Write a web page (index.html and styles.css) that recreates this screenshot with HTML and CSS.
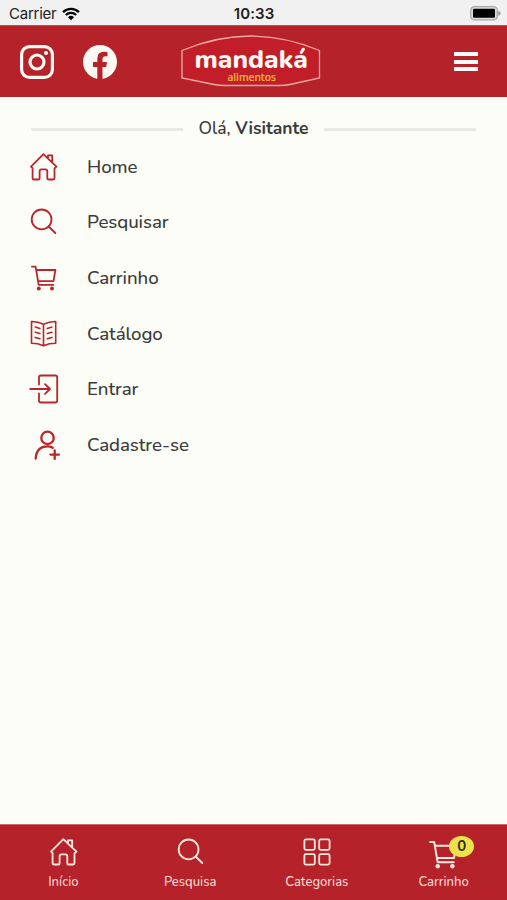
FILE: index.html
```html
<!DOCTYPE html>
<html lang="pt-BR">
<head>
<meta charset="utf-8">
<meta name="viewport" content="width=device-width">
<title>Mandaká</title>
<link rel="stylesheet" href="styles.css">
</head>
<body>
<svg class="defs" width="0" height="0">
  <symbol id="home" viewBox="0 0 28 28"><path d="M1 13.6 13.4 1.2 18 5.7V2.4h4.2v7.3l4.3 3.9-2 1.8V25q0 1.5-1.4 1.5h-4.5q-1.3 0-1.3-1.3v-6.8q0-2.1-1.9-2.1h-3.9q-1.9 0-1.9 2.1v6.8q0 1.3-1.3 1.3H4q-1.4 0-1.4-1.5v-9.8ZM18 5.7l4.2 4"/></symbol>
  <symbol id="search" viewBox="0 0 28 28"><circle cx="11.6" cy="11.4" r="9.9"/><path d="m18.700 18.500 6.600 6.500"/></symbol>
  <symbol id="cart" viewBox="0 0 28 28"><path d="M1.900 2.600h3.700l3.100 18.300h14.600M6.200 6h19.200L23.500 17.200H8"/><circle class="solid" cx="8.800" cy="24.600" r="2"/><circle class="solid" cx="22" cy="24.600" r="2"/></symbol>
</svg>
<div class="status">
  <span class="carrier">Carrier
    <svg width="18" height="14" viewBox="0 0 19 15"><g fill="none" stroke="#050505" stroke-width="2.5"><path d="M1 5.4a12.2 12.2 0 0 1 17 0"/><path d="M4 8.6a7.9 7.9 0 0 1 11 0"/></g><path d="m9.500 14.200-3.200-3.300a4.600 4.600 0 0 1 6.400 0z"/></svg>
  </span>
  <span class="clock">10:33</span>
  <svg class="battery" width="31" height="15" viewBox="0 0 31 15"><rect x=".7" y=".7" width="26.6" height="13.2" rx="3.6" fill="#ddd" stroke="#aaa" stroke-width="1.3"/><rect x="3" y="2.8" width="22" height="9" rx="1" fill="#000"/><path d="M28.3 4.7q2.3.8 2.3 2.6t-2.3 2.6z" fill="#999"/></svg>
</div>
<header class="top">
  <div class="social">
    <svg width="34" height="34" viewBox="0 0 34 34" fill="none" stroke="#fff9f3"><rect x="1.6" y="1.6" width="30.8" height="30.8" rx="8" stroke-width="3.2"/><circle cx="17" cy="17" r="7" stroke-width="3.2"/><circle cx="26" cy="8" r="2.1" fill="#fff9f3" stroke="none"/></svg>
    <svg width="34" height="34" viewBox="0 0 34 34"><circle cx="17" cy="17" r="17" fill="#fff9f3"/><path fill="#b52229" d="M14.3 34V22H10v-4.9h4.3v-3.7q0-6.6 6.6-6.6 1.9 0 3.6.4v4.1h-2q-3 0-3 2.8v3H24l-.8 4.900h-3.700v12z"/></svg>
  </div>
  <svg class="logo" width="140" height="52" viewBox="0 0 140 52">
    <path d="M1 14.500Q70-14.500 138.500 14.500V42L109 48.500Q104 49.500 98 49.500H44Q38 49.500 33 48.500L1 42Z" fill="#c11e29" stroke="#f0aaa3" stroke-width="1.300"/>
    <text class="brand" x="13.500" y="32.300" textLength="113.500" lengthAdjust="spacingAndGlyphs">mandaká</text>
    <text class="tagline" x="46.500" y="45" textLength="48.500" lengthAdjust="spacingAndGlyphs">alimentos</text>
  </svg>
  <div class="burger"><i></i><i></i><i></i></div>
</header>
<main>
  <div class="hello"><span class="rule"></span><p>Olá, <b>Visitante</b></p><span class="rule"></span></div>
  <nav class="menu">
    <a><svg class="icon"><use href="#home"/></svg><span>Home</span></a>
    <a><svg class="icon"><use href="#search"/></svg><span>Pesquisar</span></a>
    <a><svg class="icon"><use href="#cart"/></svg><span>Carrinho</span></a>
    <a><svg class="icon book" viewBox="0 0 28 28"><path d="M13.500 4.300Q7.500 1.300 1.500 1.500V23.300Q8 23.300 13.500 25.700 19 23.300 25.700 23.300V1.500Q19.500 1.300 13.500 4.300V25.500M5.300 7.100l4.600 1.400M5.300 12.200l4.600 1.400M5.300 17.400l4.600 1.400M21.900 7.100l-4.600 1.400M21.900 12.200l-4.600 1.400M21.900 17.400l-4.600 1.400"/></svg><span>Catálogo</span></a>
    <a><svg class="icon" viewBox="0 0 28 28"><path d="M9 9.500V2.500q0-2 2-2h14.200q2 0 2 2v23q0 2-2 2H11q-2 0-2-2v-7M.3 14h19M15 9.200l5 4.800-5 4.800"/></svg><span>Entrar</span></a>
    <a><svg class="icon user" viewBox="0 0 28 28"><circle cx="17.500" cy="6.900" r="6.200"/><path d="M5.700 27.500Q6.500 15 18.500 15.400q2.500.2 4.200 1.400M24.700 19.300v8.600M20.400 23.600H29"/></svg><span>Cadastre-se</span></a>
  </nav>
</main>
<footer class="tabs">
  <a><svg class="icon"><use href="#home"/></svg><span>Início</span></a>
  <a><svg class="icon"><use href="#search"/></svg><span>Pesquisa</span></a>
  <a><svg class="icon" viewBox="0 0 28 28"><rect x="1.400" y="1.400" width="10.400" height="10.400" rx="1.500"/><rect x="16.200" y="1.400" width="10.400" height="10.400" rx="1.500"/><rect x="1.400" y="16.200" width="10.400" height="10.400" rx="1.500"/><rect x="16.200" y="16.200" width="10.400" height="10.400" rx="1.500"/></svg><span>Categorias</span></a>
  <a class="basket"><svg class="icon"><use href="#cart"/></svg><b class="badge">0</b><span>Carrinho</span></a>
</footer>
</body>
</html>
```
FILE: styles.css
```css
* { box-sizing: border-box; }
body {
  margin: 0;
  height: 900px;
  display: flex;
  flex-direction: column;
  overflow: hidden;
  background: #fcfdf6;
  color: #3a3b3d;
  font-family: Nunito, "Noto Sans", sans-serif;
}
svg { display: block; overflow: visible; flex: none; }
.defs { position: absolute; }
.status {
  height: 25px;
  flex: none;
  display: grid;
  grid-template-columns: 1fr auto 1fr;
  align-items: center;
  padding: 2px 6px 0 9px;
  background: #f1f1f1;
  color: #222;
  font: 15px Inter, sans-serif;
}
.carrier { display: flex; gap: 6px; align-items: center; letter-spacing: -.25px; }
.clock { margin-left: -2px; font-weight: 600; letter-spacing: .1px; }
.battery { justify-self: end; }
.top {
  height: 72px;
  flex: none;
  display: grid;
  grid-template-columns: 164px 140px 1fr;
  align-items: center;
  padding: 0 29px 0 20px;
  background: #b52229;
  border-top: 1px solid #cb4348;
}
.social { display: flex; gap: 29px; }
.logo { margin-left: -3px; }
.brand {
  font: 800 26px Nunito, "Noto Sans", sans-serif;
  fill: #fff8f3;
}
.tagline {
  font: 500 11px "Noto Sans", sans-serif;
  fill: #f3b43c;
  stroke: #f3b43c;
  stroke-width: .2px;
}
.burger { justify-self: end; display: grid; gap: 3.5px; }
.burger i { width: 24px; height: 4px; background: #fffaf7; }
main { flex: 1; padding: 20px 31px 0; }
.hello { display: flex; align-items: center; height: 22px; }
.hello p {
  width: 141px;
  margin: 0;
  text-align: center;
  white-space: nowrap;
  font-size: 17.5px;
  font-weight: 500;
}
.rule { flex: 1; height: 3px; margin-top: 3px; background: #e8e9e4; }
.menu { margin-left: -1px; }
.menu a { display: flex; align-items: center; height: 55.6px; gap: 29px; }
.menu span {
  font-size: 18.7px;
  font-weight: 500;
  letter-spacing: -.08px;
  line-height: 26px;
  white-space: nowrap;
}
.icon {
  width: 28px;
  height: 28px;
  color: #b9252e;
  fill: none;
  stroke: currentColor;
  stroke-width: 1.8;
  stroke-linejoin: round;
  stroke-linecap: round;
}
.solid { fill: currentColor; stroke: none; }
.user { stroke-width: 2.3; }
.book { stroke-width: 1.6; }
.tabs {
  height: 76px;
  flex: none;
  display: grid;
  grid-template-columns: repeat(4, 1fr);
  background: #b52229;
  border-top: 1px solid #d2696a;
}
.tabs a {
  position: relative;
  display: flex;
  flex-direction: column;
  align-items: center;
  padding-top: 13px;
}
.tabs .icon { margin-left: 1px; color: #ffe8df; }
.tabs span { margin-top: 7px; font-size: 13px; font-weight: 500; line-height: 18px; color: #fbd9d0; }
.tabs .basket .icon { width: 31px; height: 31px; margin: 1px 0 -4px; }
.badge {
  position: absolute;
  left: 69px;
  top: 11px;
  width: 25px;
  height: 21px;
  border-radius: 50%;
  background: #eee24b;
  color: #30310f;
  font-size: 15px;
  line-height: 21px;
  text-align: center;
}
```
